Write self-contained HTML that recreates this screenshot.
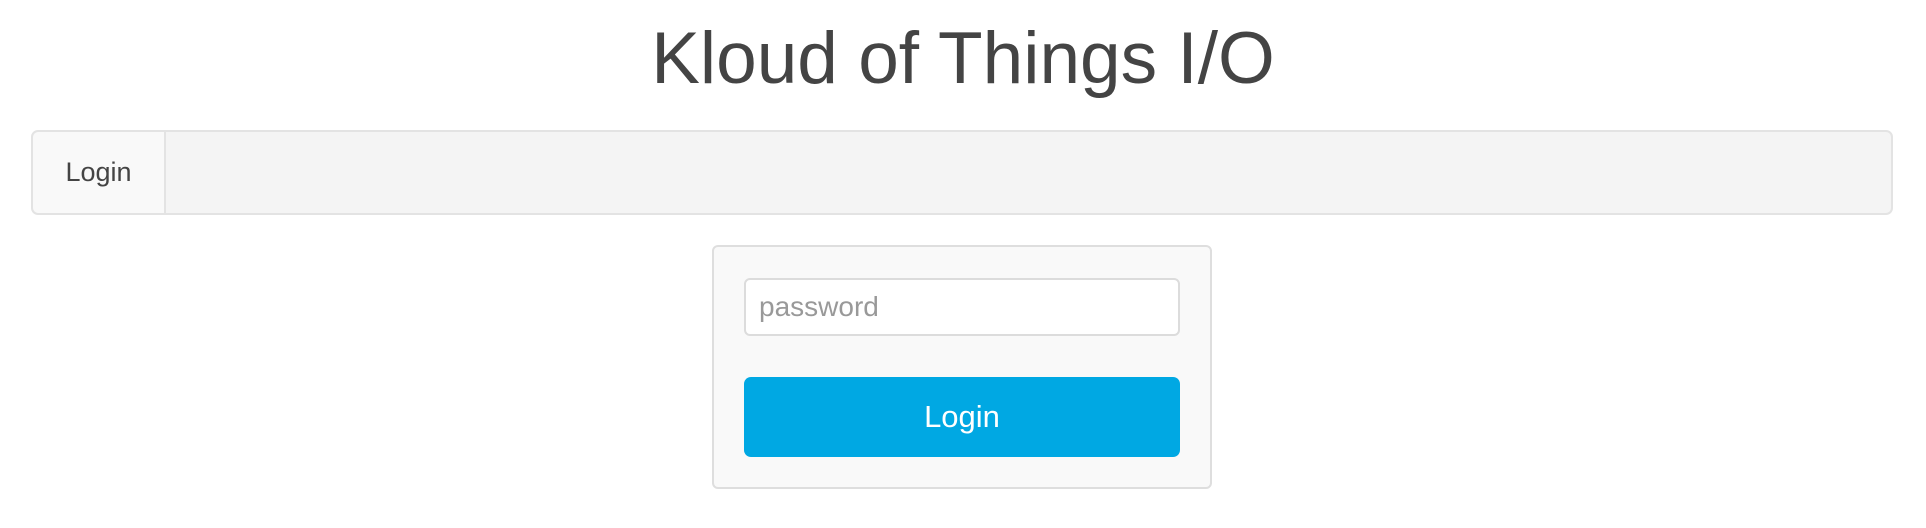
<!DOCTYPE html>
<html><head><style>
html,body{margin:0;padding:0;background:#fff;width:1926px;height:528px;overflow:hidden;font-family:"Liberation Sans",Arial,sans-serif;}
.title{position:absolute;left:0;width:1926px;top:14px;text-align:center;font-size:73px;color:#444;line-height:90px;}
.nav{position:absolute;left:31px;top:130px;width:1858px;height:81px;background:#f4f4f4;border:2px solid #e3e3e3;border-radius:7px;}
.tab{position:absolute;left:0;top:0;width:131px;height:81px;background:#f9f9f9;border-right:2px solid #e3e3e3;border-radius:6px 0 0 6px;font-size:27px;color:#444;line-height:81px;text-align:center;}
.panel{position:absolute;left:712px;top:245px;width:496px;height:240px;background:#f9f9f9;border:2px solid #dedede;border-radius:6px;}
.input{position:absolute;left:30px;top:31px;width:432px;height:54px;background:#fff;border:2px solid #dcdcdc;border-radius:6px;font-size:28px;color:#999;line-height:54px;padding-left:13px;box-sizing:content-box;width:419px;}
.btn{position:absolute;left:30px;top:130px;width:436px;height:80px;background:#00a8e3;border-radius:7px;color:#fff;font-size:31px;line-height:80px;text-align:center;}
</style></head><body>
<div class="title">Kloud of Things I/O</div>
<div class="nav"><div class="tab">Login</div></div>
<div class="panel">
<div class="input">password</div>
<div class="btn">Login</div>
</div>
</body></html>
